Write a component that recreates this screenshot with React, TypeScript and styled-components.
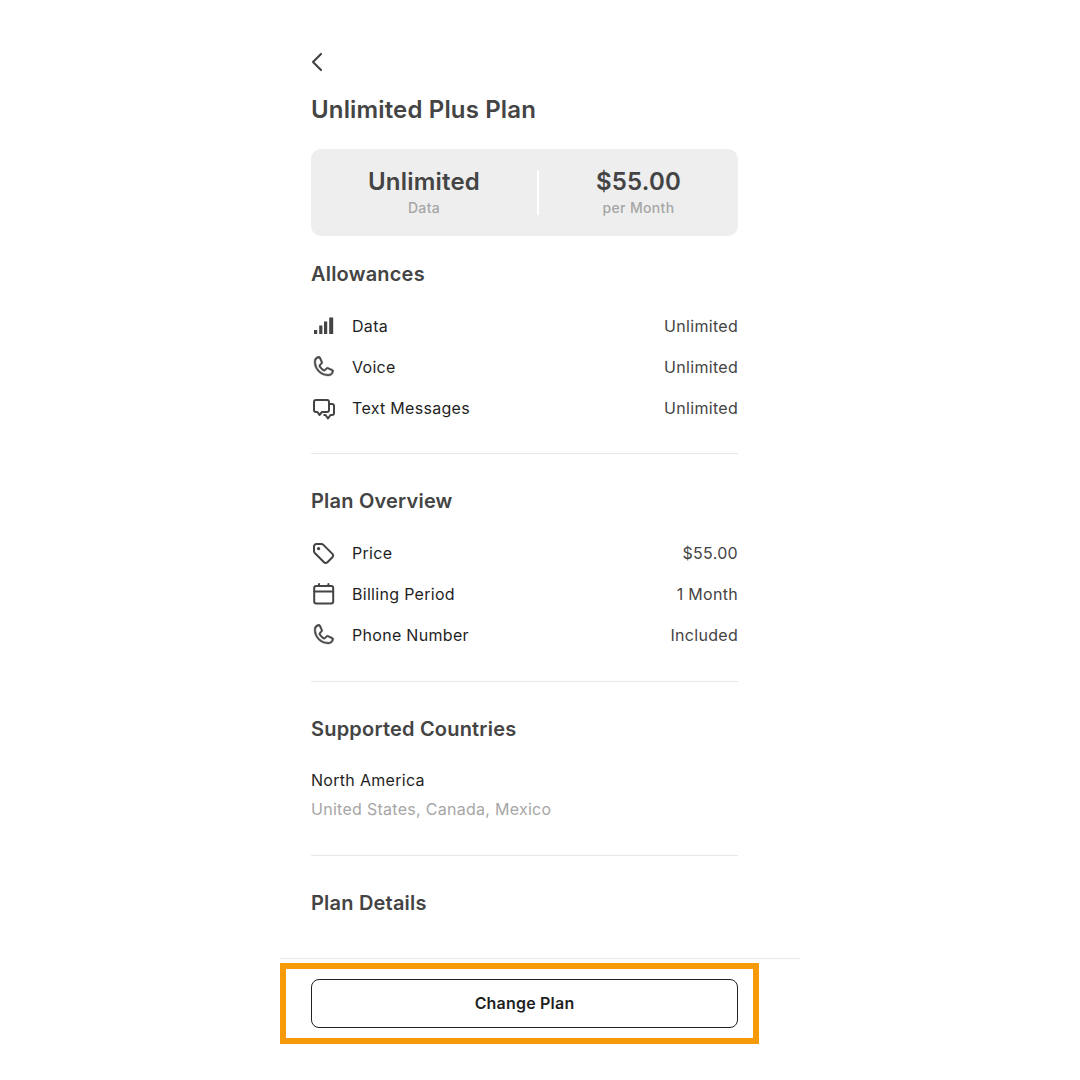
import React from 'react';
import styled, { createGlobalStyle } from 'styled-components';
import { ChevronLeft } from 'lucide-react';
import { PiPhone } from 'react-icons/pi';

const GlobalStyle = createGlobalStyle`
  html, body {
    margin: 0;
    padding: 0;
    background: #ffffff;
    font-family: Inter, "Liberation Sans", sans-serif;
  }
`;

const Screen = styled.div`
  width: 520px;
  height: 1080px;
  margin: 0 auto;
  display: flex;
  flex-direction: column;
`;

const Content = styled.main`
  height: 958px;
  box-sizing: border-box;
  padding: 50px 62px 0 31px;
  overflow: hidden;
`;

const BackButton = styled.div`
  height: 24px;
  margin-left: -10px;
  color: #444444;
  display: flex;
  align-items: center;
`;

const Title = styled.h1`
  margin: 20px 0 0;
  font-size: 24px;
  line-height: 32px;
  font-weight: 600;
  letter-spacing: 0.15px;
  color: #444444;
`;

const SummaryCard = styled.div`
  margin-top: 23px;
  height: 87px;
  border-radius: 10px;
  background: #eeeeee;
  display: grid;
  grid-template-columns: 226px 2px 1fr;
  align-items: center;
`;

const SummaryItem = styled.div`
  text-align: center;
`;

const SummaryValue = styled.div`
  margin-bottom: 2px;
  font-size: 24px;
  line-height: 28px;
  font-weight: 600;
  letter-spacing: 0.2px;
  color: #444444;
`;

const SummaryLabel = styled.div`
  font-size: 14px;
  line-height: 20px;
  font-weight: 500;
  letter-spacing: 0.35px;
  color: #a6a6a6;
`;

const SummaryDivider = styled.div`
  width: 2px;
  height: 45px;
  background: #ffffff;
`;

const Section = styled.section<{ $divided?: boolean }>`
  padding-top: 33px;
  padding-bottom: ${({ $divided }) => ($divided ? '26px' : '0')};
  border-bottom: ${({ $divided }) => ($divided ? '1px solid #e8e8e8' : 'none')};
`;

const FirstSection = styled(Section)`
  padding-top: 24px;
  padding-bottom: 25px;
`;

const SectionTitle = styled.h2`
  margin: 0 0 17px;
  font-size: 20px;
  line-height: 28px;
  font-weight: 600;
  letter-spacing: 0.2px;
  color: #444444;
`;

const Row = styled.div`
  height: 41px;
  display: flex;
  align-items: center;
`;

const IconSlot = styled.div`
  width: 41px;
  height: 24px;
  color: #444444;
  display: flex;
  align-items: center;
`;

const RowLabel = styled.span`
  flex: 1;
  font-size: 16px;
  line-height: 24px;
  letter-spacing: 0.3px;
  color: #1f1f1f;
`;

const RowValue = styled.span`
  font-size: 16px;
  line-height: 24px;
  letter-spacing: 0.3px;
  color: #444444;
`;

const RegionBlock = styled.div`
  padding: 6px 0 5px;
`;

const Region = styled.div`
  font-size: 16px;
  line-height: 29px;
  letter-spacing: 0.3px;
  color: #1f1f1f;
`;

const RegionCountries = styled.div`
  font-size: 16px;
  line-height: 29px;
  letter-spacing: 0.28px;
  color: #a6a6a6;
`;

const Footer = styled.footer`
  border-top: 1px solid #e8e8e8;
  padding-top: 4px;
`;

const Highlight = styled.div`
  width: 479px;
  height: 81px;
  box-sizing: border-box;
  border: 6px solid #f79a09;
  padding: 10px 15px 0 25px;
`;

const ChangeButton = styled.button`
  width: 100%;
  height: 49px;
  padding: 0 0 2px;
  border: 1px solid #222222;
  border-radius: 8px;
  background: #ffffff;
  font-family: inherit;
  font-size: 16px;
  font-weight: 600;
  letter-spacing: 0.2px;
  color: #1f1f1f;
`;

const SignalIcon = () => (
  <svg width="24" height="24" viewBox="0 0 24 24" fill="currentColor">
    <rect x="3" y="16" width="3.2" height="4" />
    <rect x="8.2" y="11.5" width="3.2" height="8.5" />
    <rect x="13" y="7.5" width="3.2" height="12.5" />
    <rect x="18.2" y="3.5" width="4" height="16.5" />
  </svg>
);

const PhoneIcon = () => <PiPhone size={25} stroke="currentColor" strokeWidth={5} />;

const ChatIcon = () => (
  <svg width="24" height="24" viewBox="0 0 24 24" fill="none" stroke="currentColor" strokeWidth="2" strokeLinejoin="round">
    <path d="M5 4h11a2 2 0 0 1 2 2v8a2 2 0 0 1-2 2h-5l-2.5 3L6.5 16H5a2 2 0 0 1-2-2V6a2 2 0 0 1 2-2z" />
    <path d="M18 8h3a2 2 0 0 1 2 2v7a2 2 0 0 1-2 2h-1.5L17 22.5 14.5 19H12.5" />
  </svg>
);

const TagIcon = () => (
  <svg width="24" height="24" viewBox="0 0 24 24" fill="none" stroke="currentColor" strokeWidth="2" strokeLinejoin="round">
    <path d="M5.5 3h4.8a3 3 0 0 1 2.1.9l9 9a2.4 2.4 0 0 1 0 3.4l-5 5a2.4 2.4 0 0 1-3.4 0l-9-9A3 3 0 0 1 3 10.2V5.5A2.5 2.5 0 0 1 5.5 3z" />
    <circle cx="7.6" cy="7.6" r="0.7" fill="currentColor" />
  </svg>
);

const CalendarIcon = () => (
  <svg width="24" height="24" viewBox="0 0 24 24" fill="none" stroke="currentColor" strokeWidth="2" strokeLinecap="round">
    <rect x="3.2" y="4" width="19" height="17.5" rx="2" />
    <path d="M3.2 9.5h19M8 2v2M17.4 2v2" />
  </svg>
);

type RowData = { icon: React.ReactNode; label: string; value: string };

const allowances: RowData[] = [
  { icon: <SignalIcon />, label: 'Data', value: 'Unlimited' },
  { icon: <PhoneIcon />, label: 'Voice', value: 'Unlimited' },
  { icon: <ChatIcon />, label: 'Text Messages', value: 'Unlimited' },
];

const overview: RowData[] = [
  { icon: <TagIcon />, label: 'Price', value: '$55.00' },
  { icon: <CalendarIcon />, label: 'Billing Period', value: '1 Month' },
  { icon: <PhoneIcon />, label: 'Phone Number', value: 'Included' },
];

const Rows = ({ items }: { items: RowData[] }) => (
  <>
    {items.map((item) => (
      <Row key={item.label}>
        <IconSlot>{item.icon}</IconSlot>
        <RowLabel>{item.label}</RowLabel>
        <RowValue>{item.value}</RowValue>
      </Row>
    ))}
  </>
);

export default function App() {
  return (
    <>
      <GlobalStyle />
      <Screen>
        <Content>
          <BackButton>
            <ChevronLeft size={32} strokeWidth={1.6} />
          </BackButton>
          <Title>Unlimited Plus Plan</Title>
          <SummaryCard>
            <SummaryItem>
              <SummaryValue>Unlimited</SummaryValue>
              <SummaryLabel>Data</SummaryLabel>
            </SummaryItem>
            <SummaryDivider />
            <SummaryItem>
              <SummaryValue>$55.00</SummaryValue>
              <SummaryLabel>per Month</SummaryLabel>
            </SummaryItem>
          </SummaryCard>
          <FirstSection $divided>
            <SectionTitle>Allowances</SectionTitle>
            <Rows items={allowances} />
          </FirstSection>
          <Section $divided>
            <SectionTitle>Plan Overview</SectionTitle>
            <Rows items={overview} />
          </Section>
          <Section $divided>
            <SectionTitle>Supported Countries</SectionTitle>
            <RegionBlock>
              <Region>North America</Region>
              <RegionCountries>United States, Canada, Mexico</RegionCountries>
            </RegionBlock>
          </Section>
          <Section>
            <SectionTitle>Plan Details</SectionTitle>
          </Section>
        </Content>
        <Footer>
          <Highlight>
            <ChangeButton>Change Plan</ChangeButton>
          </Highlight>
        </Footer>
      </Screen>
    </>
  );
}
